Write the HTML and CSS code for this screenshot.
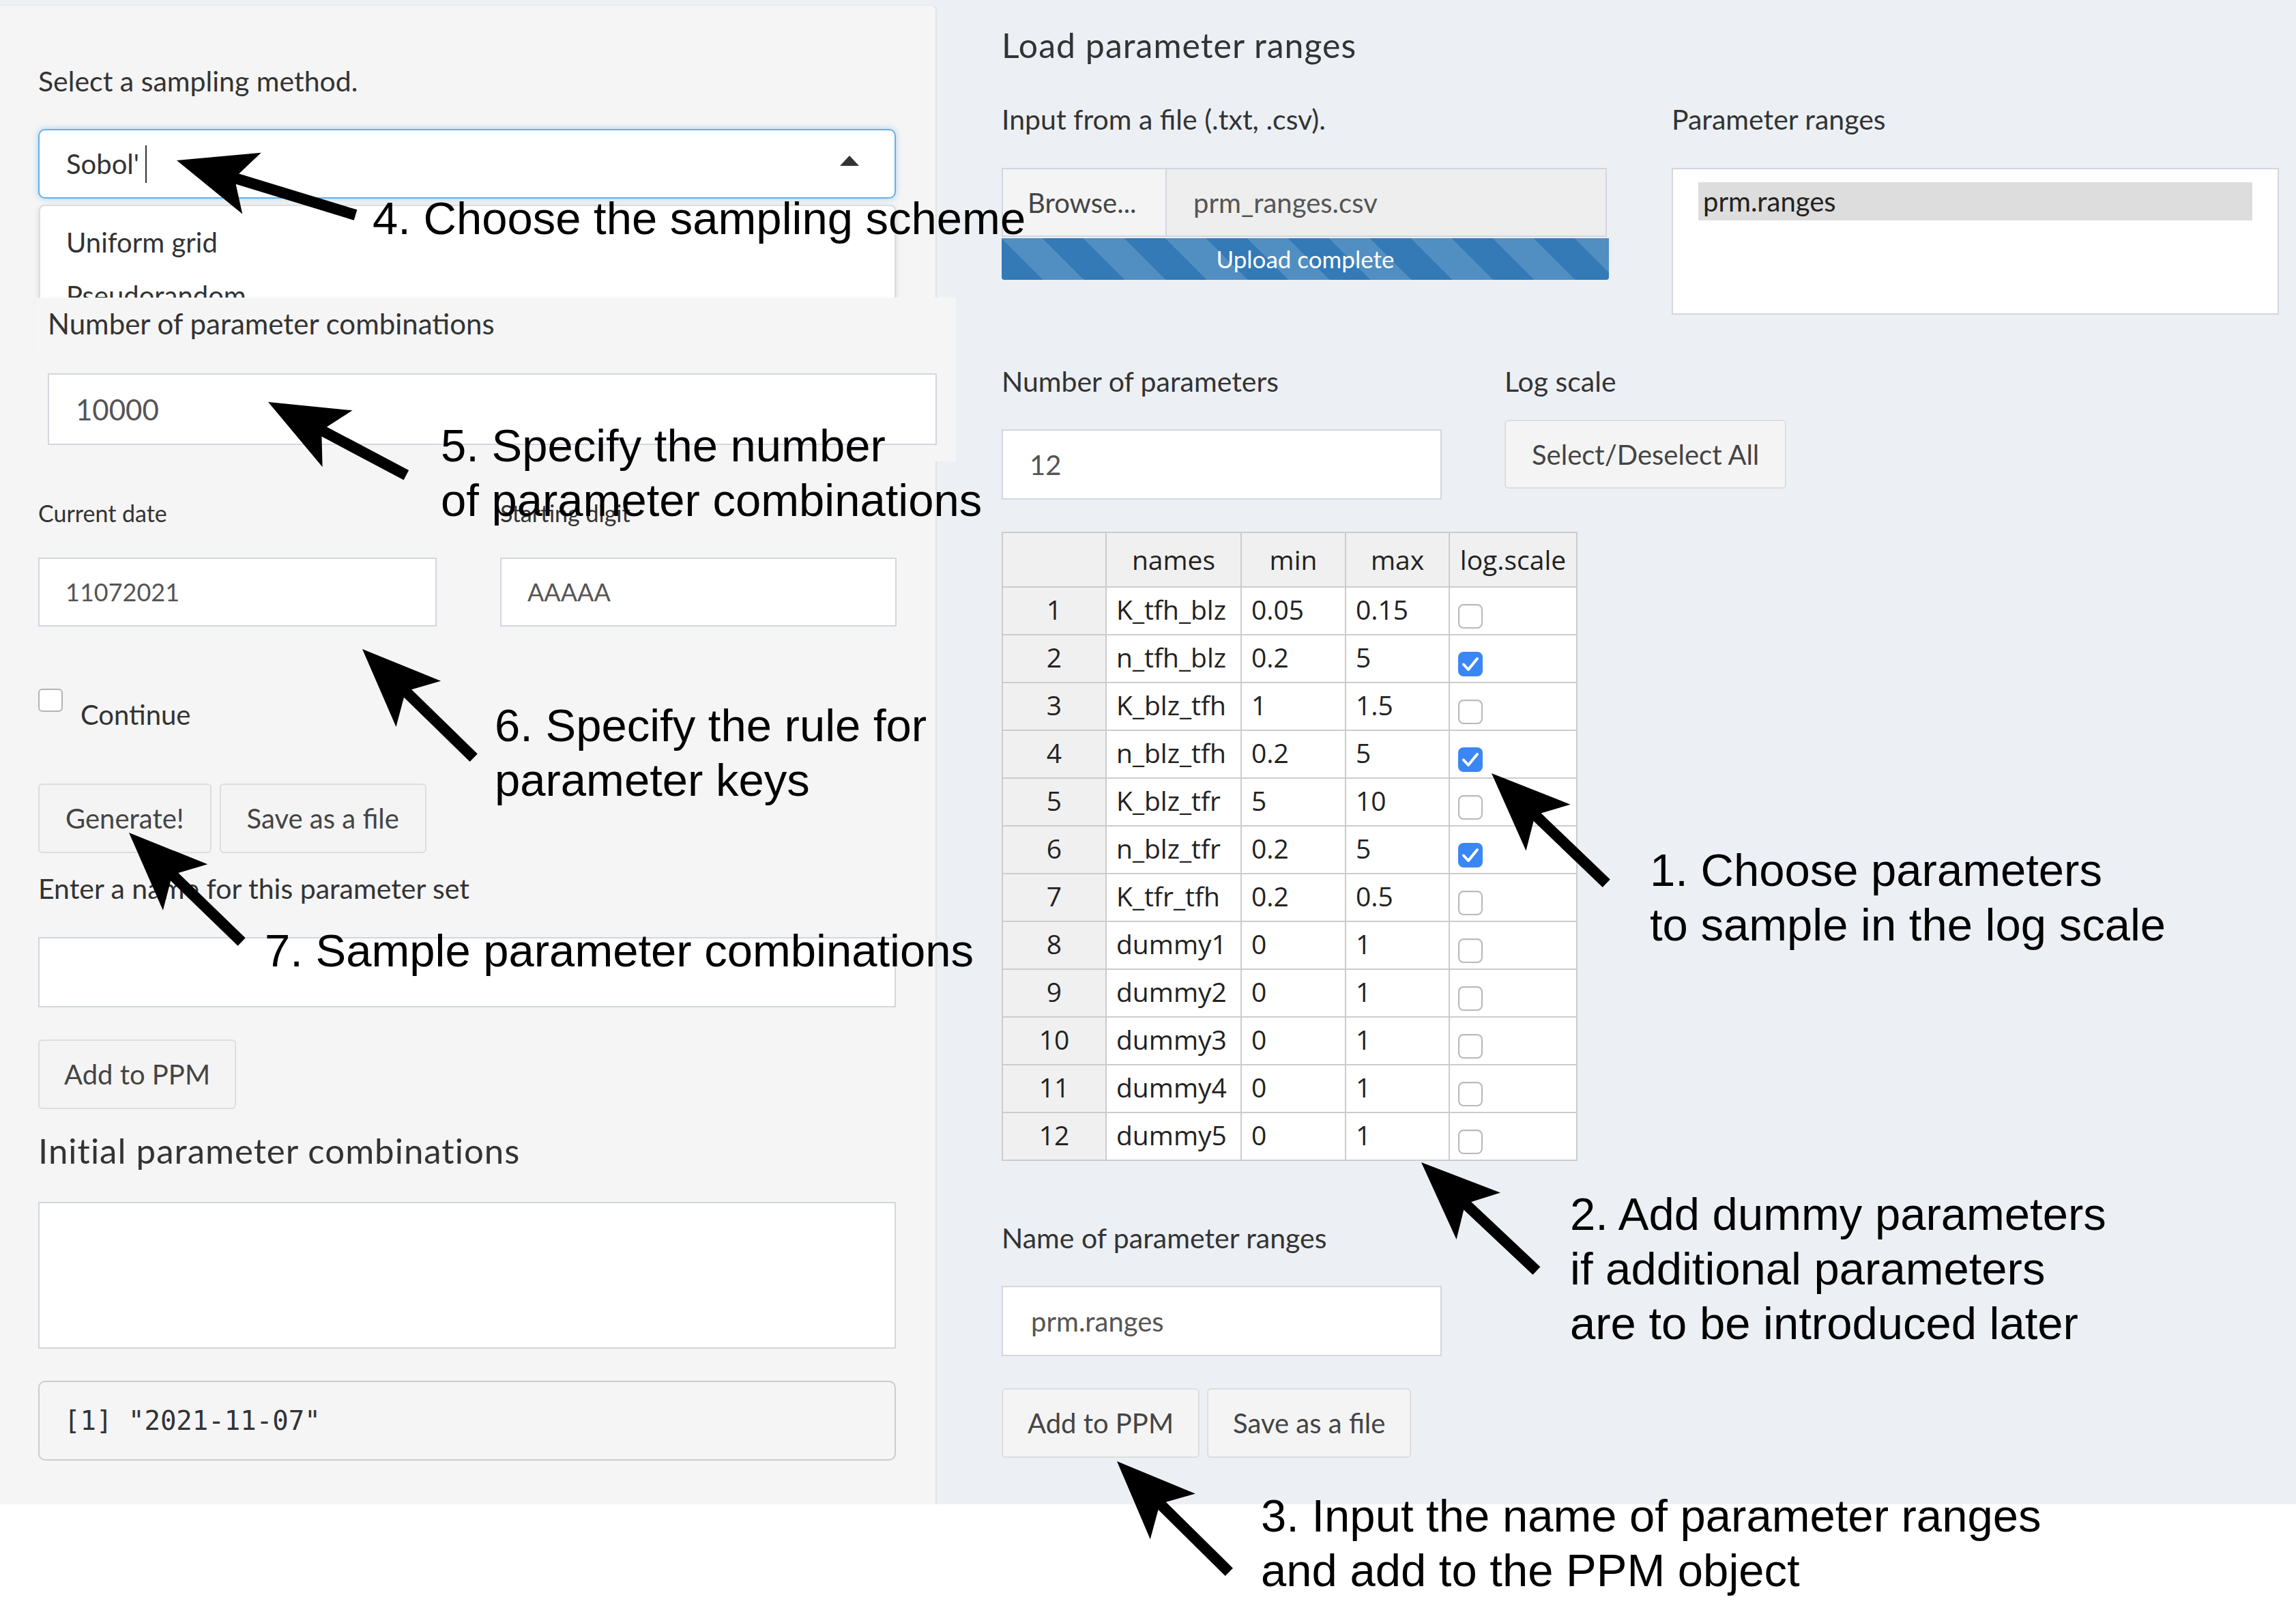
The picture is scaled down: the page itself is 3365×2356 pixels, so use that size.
FILE: index.html
```html
<!DOCTYPE html>
<html lang="en">
<head>
<meta charset="utf-8">
<title>Parameter sampling</title>
<link rel="stylesheet" href="styles.css">
</head>
<body>
<div class="main">
  <aside class="panel">
    <div class="lbl">Select a sampling method.</div>
    <div class="select-wrap">
      <div class="select">
        <span>Sobol'</span><span class="cursor"></span>
        <span class="tri"></span>
      </div>
      <div class="dropdown">
        <div class="opt">Uniform grid</div>
        <div class="opt">Pseudorandom</div>
      </div>
    </div>
    <div class="patch">
      <div class="lbl lbl-lg">Number of parameter combinations</div>
      <div class="input input-lg">10000</div>
    </div>
    <div class="pair">
      <div>
        <div class="lbl lbl-sm">Current date</div>
        <div class="input input-sm">11072021</div>
      </div>
      <div>
        <div class="lbl lbl-sm">Starting digit</div>
        <div class="input input-sm">AAAAA</div>
      </div>
    </div>
    <div class="check-row"><span class="cb"></span><span class="cb-label">Continue</span></div>
    <div class="btn-row btn-row-gen"><span class="btn">Generate!</span><span class="btn">Save as a file</span></div>
    <div class="lbl lbl-name">Enter a name for this parameter set</div>
    <div class="input input-name"></div>
    <div class="btn-row btn-row-add"><span class="btn">Add to PPM</span></div>
    <h3 class="heading">Initial parameter combinations</h3>
    <div class="textbox"></div>
    <div class="pre">[1] "2021-11-07"</div>
  </aside>

  <section class="right">
    <h2 class="title">Load parameter ranges</h2>
    <div class="r-row1">
      <div>
        <div class="lbl">Input from a file (.txt, .csv).</div>
        <div class="fileinput">
          <div class="browse">Browse...</div>
          <div class="fname">prm_ranges.csv</div>
        </div>
        <div class="progress">Upload complete</div>
      </div>
      <div>
        <div class="lbl">Parameter ranges</div>
        <div class="listbox"><div class="lb-item">prm.ranges</div></div>
      </div>
    </div>
    <div class="r-row2">
      <div>
        <div class="lbl">Number of parameters</div>
        <div class="input input-num">12</div>
      </div>
      <div>
        <div class="lbl">Log scale</div>
        <div class="btn-wrap"><span class="btn">Select/Deselect All</span></div>
      </div>
    </div>

    <div class="dtable">
      <div class="th"></div><div class="th">names</div><div class="th">min</div><div class="th">max</div><div class="th">log.scale</div>

      <div class="rh">1</div><div class="td">K_tfh_blz</div><div class="td">0.05</div><div class="td">0.15</div><div class="td"><span class="tcb"></span></div>
      <div class="rh">2</div><div class="td">n_tfh_blz</div><div class="td">0.2</div><div class="td">5</div><div class="td"><span class="tcb on"><svg viewBox="0 0 36 36" width="36" height="36"><path d="M8 18.5 L15 26 L28 10" fill="none" stroke="#fff" stroke-width="4" stroke-linecap="round" stroke-linejoin="round"/></svg></span></div>
      <div class="rh">3</div><div class="td">K_blz_tfh</div><div class="td">1</div><div class="td">1.5</div><div class="td"><span class="tcb"></span></div>
      <div class="rh">4</div><div class="td">n_blz_tfh</div><div class="td">0.2</div><div class="td">5</div><div class="td"><span class="tcb on"><svg viewBox="0 0 36 36" width="36" height="36"><path d="M8 18.5 L15 26 L28 10" fill="none" stroke="#fff" stroke-width="4" stroke-linecap="round" stroke-linejoin="round"/></svg></span></div>
      <div class="rh">5</div><div class="td">K_blz_tfr</div><div class="td">5</div><div class="td">10</div><div class="td"><span class="tcb"></span></div>
      <div class="rh">6</div><div class="td">n_blz_tfr</div><div class="td">0.2</div><div class="td">5</div><div class="td"><span class="tcb on"><svg viewBox="0 0 36 36" width="36" height="36"><path d="M8 18.5 L15 26 L28 10" fill="none" stroke="#fff" stroke-width="4" stroke-linecap="round" stroke-linejoin="round"/></svg></span></div>
      <div class="rh">7</div><div class="td">K_tfr_tfh</div><div class="td">0.2</div><div class="td">0.5</div><div class="td"><span class="tcb"></span></div>
      <div class="rh">8</div><div class="td">dummy1</div><div class="td">0</div><div class="td">1</div><div class="td"><span class="tcb"></span></div>
      <div class="rh">9</div><div class="td">dummy2</div><div class="td">0</div><div class="td">1</div><div class="td"><span class="tcb"></span></div>
      <div class="rh">10</div><div class="td">dummy3</div><div class="td">0</div><div class="td">1</div><div class="td"><span class="tcb"></span></div>
      <div class="rh">11</div><div class="td">dummy4</div><div class="td">0</div><div class="td">1</div><div class="td"><span class="tcb"></span></div>
      <div class="rh">12</div><div class="td">dummy5</div><div class="td">0</div><div class="td">1</div><div class="td"><span class="tcb"></span></div>
    </div>

    <div class="lbl lbl-rname">Name of parameter ranges</div>
    <div class="input input-rname">prm.ranges</div>
    <div class="btn-row btn-row-r"><span class="btn">Add to PPM</span><span class="btn">Save as a file</span></div>
  </section>
</div>

<svg class="arrows" width="3365" height="2356" viewBox="0 0 3365 2356">
  <g fill="#000">
    <path transform="translate(259 235) rotate(16.98)" d="M0 0 L115 -47 L93 -8 L274 -8 L274 8 L93 8 L115 47 Z"/>
    <path transform="translate(393 589) rotate(27.91)" d="M0 0 L115 -47 L93 -8 L229 -8 L229 8 L93 8 L115 47 Z"/>
    <path transform="translate(531 951) rotate(44.29)" d="M0 0 L115 -47 L93 -8 L228 -8 L228 8 L93 8 L115 47 Z"/>
    <path transform="translate(189 1220) rotate(44.12)" d="M0 0 L115 -47 L93 -8 L230 -8 L230 8 L93 8 L115 47 Z"/>
    <path transform="translate(2186 1133) rotate(43.78)" d="M0 0 L115 -47 L93 -8 L233 -8 L233 8 L93 8 L115 47 Z"/>
    <path transform="translate(2083 1703) rotate(43.25)" d="M0 0 L115 -47 L93 -8 L232 -8 L232 8 L93 8 L115 47 Z"/>
    <path transform="translate(1637 2141) rotate(44.65)" d="M0 0 L115 -47 L93 -8 L231 -8 L231 8 L93 8 L115 47 Z"/>
  </g>
</svg>

<div class="note note-4">4. Choose the sampling scheme</div>
<div class="note note-5">5. Specify the number<br>of parameter combinations</div>
<div class="note note-6">6. Specify the rule for<br>parameter keys</div>
<div class="note note-7">7. Sample parameter combinations</div>
<div class="note note-1">1. Choose parameters<br>to sample in the log scale</div>
<div class="note note-2">2. Add dummy parameters<br>if additional parameters<br>are to be introduced later</div>
<div class="note note-3">3. Input the name of parameter ranges<br>and add to the PPM object</div>
</body>
</html>
```

FILE: styles.css
```css
* { box-sizing: border-box; }

html, body {
  margin: 0;
  padding: 0;
  background: #ffffff;
}

body {
  width: 3365px;
  height: 2356px;
  position: relative;
  overflow: hidden;
  font-family: Lato, "Liberation Sans", sans-serif;
  color: #333333;
}

.main {
  display: flex;
  height: 2204px;
  background: #ecf0f5;
}

/* ---------- left panel ---------- */
.panel {
  flex: none;
  width: 1373px;
  height: 2197px;
  margin-top: 7px;
  padding: 87px 0 0 56px;
  background: #f5f5f5;
  border-top: 1px solid #e3e3e3;
  border-right: 2px solid #e3e3e3;
  border-top-right-radius: 8px;
}

.lbl {
  font-size: 41px;
  line-height: 48px;
  color: #333333;
  white-space: nowrap;
}

.select-wrap {
  position: relative;
  width: 1257px;
  margin-top: 46px;
}

.select {
  display: flex;
  align-items: center;
  height: 102px;
  padding-left: 39px;
  background: #ffffff;
  border: 2px solid #66afe9;
  border-radius: 10px;
  box-shadow: 0 0 10px rgba(102, 175, 233, 0.55);
  font-size: 40px;
  line-height: 48px;
  color: #333333;
  position: relative;
  z-index: 1;
}

.cursor {
  width: 2px;
  height: 55px;
  margin-left: 9px;
  background: #333333;
}

.tri {
  width: 0;
  height: 0;
  margin-left: auto;
  margin-right: 52px;
  margin-bottom: 9px;
  border-left: 14.5px solid transparent;
  border-right: 14.5px solid transparent;
  border-bottom: 15px solid #333333;
}

.dropdown {
  position: absolute;
  top: 111px;
  left: 1px;
  width: 1256px;
  height: 220px;
  padding-top: 14px;
  background: #ffffff;
  border: 2px solid #dddddd;
  border-radius: 8px;
  box-shadow: 0 3px 8px rgba(0, 0, 0, 0.12);
  z-index: 1;
}

.opt {
  height: 78px;
  padding: 15px 0 0 38px;
  font-size: 40px;
  line-height: 48px;
  color: #333333;
}

.patch {
  position: relative;
  z-index: 2;
  width: 1349px;
  margin: 145px 0 0 -4px;
  padding: 13px 0 24px 18px;
  background: #f5f5f5;
}

.lbl-lg {
  font-size: 42px;
  line-height: 50px;
}

.input {
  display: flex;
  align-items: center;
  padding-left: 38px;
  background: #ffffff;
  border: 2px solid #d2d6de;
  font-size: 40px;
  line-height: 48px;
  color: #555555;
}

.input-lg {
  width: 1303px;
  height: 105px;
  margin-top: 48px;
  padding-left: 39px;
  font-size: 42px;
  line-height: 50px;
}

.pair {
  display: grid;
  grid-template-columns: 584px 581px;
  column-gap: 93px;
  margin-top: 55px;
}

.lbl-sm {
  font-size: 34px;
  line-height: 41px;
}

.input-sm {
  height: 101px;
  margin-top: 45px;
  font-size: 36px;
  line-height: 43px;
}

.check-row {
  display: flex;
  align-items: flex-start;
  margin-top: 91px;
}

.cb {
  width: 36px;
  height: 34px;
  background: #ffffff;
  border: 2px solid #b4b4b4;
  border-radius: 6px;
}

.cb-label {
  margin: 14px 0 0 26px;
  font-size: 40px;
  line-height: 48px;
}

.btn-row {
  display: flex;
  gap: 12px;
}

.btn {
  display: inline-flex;
  align-items: center;
  height: 102px;
  padding: 0 38px;
  background: #f4f4f4;
  border: 2px solid #dddddd;
  border-radius: 6px;
  font-size: 40px;
  line-height: 48px;
  color: #444444;
  white-space: nowrap;
}

.btn-row-gen { margin-top: 77px; }
.lbl-name { margin-top: 28px; }

.input-name {
  width: 1257px;
  height: 103px;
  margin-top: 47px;
}

.btn-row-add { margin-top: 47px; }
.btn-row-add .btn { padding: 0 36px; }

.heading {
  margin: 31px 0 0;
  font-size: 51px;
  line-height: 60px;
  letter-spacing: 1px;
  font-weight: 400;
  color: #333333;
}

.textbox {
  width: 1257px;
  height: 215px;
  margin-top: 45px;
  background: #ffffff;
  border: 2px solid #d2d6de;
}

.pre {
  display: flex;
  align-items: center;
  width: 1257px;
  height: 117px;
  margin-top: 47px;
  padding-left: 36px;
  background: #f5f5f5;
  border: 2px solid #cccccc;
  border-radius: 10px;
  font-family: "DejaVu Sans Mono", "Liberation Mono", monospace;
  font-size: 39px;
  color: #333333;
  white-space: pre;
}

/* ---------- right column ---------- */
.right {
  flex: 1;
  padding: 37px 0 0 95px;
}

.title {
  margin: 0;
  font-size: 50px;
  line-height: 58px;
  letter-spacing: 1px;
  font-weight: 400;
  color: #333333;
}

.r-row1 {
  display: grid;
  grid-template-columns: 890px 890px;
  column-gap: 92px;
  margin-top: 56px;
}

.fileinput {
  display: flex;
  width: 887px;
  height: 101px;
  margin-top: 47px;
  border: 2px solid #d2d6de;
  font-size: 40px;
  line-height: 48px;
}

.browse {
  display: flex;
  align-items: center;
  width: 240px;
  padding-left: 36px;
  background: #f4f4f4;
  border-right: 2px solid #d2d6de;
  color: #444444;
}

.fname {
  display: flex;
  align-items: center;
  flex: 1;
  padding-left: 39px;
  background: #eeeeee;
  color: #555555;
}

.progress {
  width: 890px;
  height: 61px;
  margin-top: 2px;
  background-color: #337ab7;
  background-image: linear-gradient(45deg,
    rgba(255, 255, 255, 0.15) 25%, transparent 25%,
    transparent 50%, rgba(255, 255, 255, 0.15) 50%,
    rgba(255, 255, 255, 0.15) 75%, transparent 75%, transparent);
  background-size: 120px 120px;
  border-radius: 0 0 4px 4px;
  font-size: 35px;
  line-height: 61px;
  text-align: center;
  color: #ffffff;
}

.listbox {
  width: 890px;
  height: 215px;
  margin-top: 47px;
  padding: 19px 37px 0;
  background: #ffffff;
  border: 2px solid #d2d6de;
}

.lb-item {
  height: 56px;
  padding-left: 7px;
  background: #dddddd;
  font-size: 40px;
  line-height: 56px;
  color: #222222;
}

.r-row2 {
  display: grid;
  grid-template-columns: 645px auto;
  column-gap: 92px;
  margin-top: 74px;
}

.input-num {
  height: 103px;
  margin-top: 46px;
  padding-left: 39px;
}

.btn-wrap {
  margin-top: 32px;
}

.btn-wrap .btn {
  height: 101px;
}

/* ---------- data table ---------- */
.dtable {
  display: grid;
  grid-template-columns: 152px 198px 153px 152px 187px;
  grid-template-rows: 80px repeat(12, 70px);
  width: 844px;
  margin-top: 47px;
  border-top: 2px solid #cccccc;
  border-left: 2px solid #cccccc;
  font-family: "Open Sans", "Noto Sans", sans-serif;
  font-size: 39px;
  color: #222222;
}

.th, .td, .rh {
  border-right: 2px solid #cccccc;
  border-bottom: 2px solid #cccccc;
  white-space: nowrap;
  overflow: hidden;
}

.th {
  background: #f0f0f0;
  line-height: 78px;
  text-align: center;
}

.rh {
  background: #f0f0f0;
  line-height: 64px;
  text-align: center;
}

.td {
  background: #ffffff;
  line-height: 64px;
  padding-left: 14px;
}

.tcb {
  display: block;
  width: 36px;
  height: 36px;
  margin: 24px 0 0 -2px;
  background: #ffffff;
  border: 2px solid #b9b9b9;
  border-radius: 8px;
  box-shadow: inset 0 1px 2px rgba(0, 0, 0, 0.08);
}

.tcb.on {
  background: #3a86f5;
  border: none;
  box-shadow: none;
}

.tcb svg { display: block; }

.lbl-rname { margin-top: 89px; }

.input-rname {
  width: 645px;
  height: 103px;
  margin-top: 46px;
  padding-left: 41px;
}

.btn-row-r {
  margin-top: 47px;
  gap: 11px;
}

.btn-row-r .btn { padding: 0 36px; }

/* ---------- annotations ---------- */
.arrows {
  position: absolute;
  top: 0;
  left: 0;
  z-index: 10;
  pointer-events: none;
}

.note {
  position: absolute;
  z-index: 11;
  font-family: "Liberation Sans", Arial, sans-serif;
  font-size: 67px;
  line-height: 80px;
  color: #000000;
  white-space: nowrap;
}

.note-4 { left: 546px;  top: 280px; }
.note-5 { left: 646px;  top: 613px; }
.note-6 { left: 725px;  top: 1023px; }
.note-7 { left: 388px;  top: 1353px; }
.note-1 { left: 2418px; top: 1235px; }
.note-2 { left: 2301px; top: 1739px; }
.note-3 { left: 1848px; top: 2181px; }
```
